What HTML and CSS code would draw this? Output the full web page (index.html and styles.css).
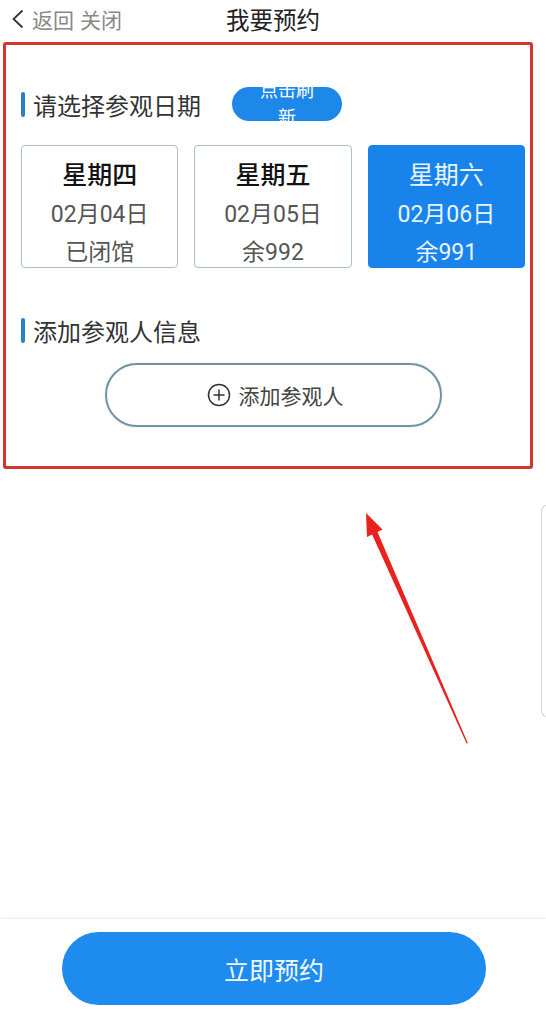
FILE: index.html
```html
<!DOCTYPE html>
<html lang="zh-CN">
<head>
  <meta charset="UTF-8">
  <meta name="viewport" content="width=device-width, initial-scale=1.0">
  <title>我要预约</title>
  <link rel="stylesheet" href="styles.css">
</head>
<body>
  <div class="page">
    <!-- Top bar -->
    <div class="topbar">
      <div class="nav-left">
        <svg class="back-icon" width="14" height="20" viewBox="0 0 14 20">
          <polyline points="11.5,1.5 2.5,10 11.5,18.5" fill="none" stroke="#333" stroke-width="1.8"/>
        </svg>
        <span>返回</span>
        <span>关闭</span>
      </div>
      <div class="nav-title">我要预约</div>
      <div></div>
    </div>

    <!-- Booking panel -->
    <div class="panel">
      <div class="section-title">
        <span class="bar"></span>
        <span>请选择参观日期</span>
        <button class="refresh-btn">点击刷新</button>
      </div>

      <div class="dates">
        <div class="date-card">
          <div class="week">星期四</div>
          <div class="day">02月04日</div>
          <div class="left">已闭馆</div>
        </div>
        <div class="date-card">
          <div class="week">星期五</div>
          <div class="day">02月05日</div>
          <div class="left">余992</div>
        </div>
        <div class="date-card active">
          <div class="week">星期六</div>
          <div class="day">02月06日</div>
          <div class="left">余991</div>
        </div>
      </div>

      <div class="section-title second">
        <span class="bar"></span>
        <span>添加参观人信息</span>
      </div>

      <button class="add-btn">
        <svg width="24" height="24" viewBox="0 0 24 24">
          <circle cx="12" cy="12" r="10.5" fill="none" stroke="#333" stroke-width="1.5"/>
          <line x1="12" y1="6.5" x2="12" y2="17.5" stroke="#333" stroke-width="1.5"/>
          <line x1="6.5" y1="12" x2="17.5" y2="12" stroke="#333" stroke-width="1.5"/>
        </svg>
        <span>添加参观人</span>
      </button>
    </div>

    <!-- Side card peeking in from the right -->
    <div class="side-card"></div>

    <!-- Bottom action -->
    <div class="bottom-bar">
      <button class="submit-btn">立即预约</button>
    </div>

    <!-- Annotation arrow -->
    <svg class="arrow" width="546" height="1013" viewBox="0 0 546 1013">
      <polygon points="366,513 382.5,529.5 377.5,532 467.8,743 466.6,743.4 372.1,534.4 367,537" fill="#e8231d"/>
    </svg>
  </div>
</body>
</html>
```

FILE: styles.css
```css
* {
  box-sizing: border-box;
}

body {
  margin: 0;
  background: #fff;
  font-family: Roboto, "Noto Sans CJK SC", sans-serif;
  color: #333;
}

.page {
  position: relative;
  width: 546px;
  height: 1013px;
  display: flex;
  flex-direction: column;
  overflow: hidden;
}

.topbar {
  height: 42px;
  display: grid;
  grid-template-columns: 1fr auto 1fr;
  align-items: center;
  padding-bottom: 4px;
}

.nav-left {
  display: flex;
  align-items: center;
  gap: 6px;
  padding-left: 11px;
  font-size: 21px;
  color: #888;
}

.back-icon {
  margin-right: 1px;
}

.nav-title {
  font-size: 23.5px;
  color: #222;
}

.panel {
  width: 530px;
  margin-left: 3px;
  border: 3px solid #d2352d;
  border-radius: 3px;
  padding: 41px 5px 39px 15px;
}

.section-title {
  display: flex;
  align-items: center;
  height: 36px;
  font-size: 24px;
  color: #333;
}

.section-title .bar {
  width: 4px;
  height: 25px;
  border-radius: 2px;
  background: #2a80c4;
  margin-right: 8px;
}

.section-title.second {
  margin-top: 47px;
  height: 30px;
}

.refresh-btn {
  margin-left: 31px;
  width: 110px;
  height: 34px;
  border: none;
  border-radius: 17px;
  background: #1e88e8;
  color: #fff;
  font-family: inherit;
  font-size: 18px;
  line-height: 27px;
  padding: 0 22px;
  display: flex;
  align-items: center;
  justify-content: center;
  text-align: center;
  overflow: visible;
}

.dates {
  margin-top: 23px;
  display: grid;
  grid-template-columns: repeat(3, 1fr);
  gap: 16px;
}

.date-card {
  height: 123px;
  border: 1px solid #aebfca;
  border-radius: 4px;
  padding-top: 10px;
  text-align: center;
  color: #555;
}

.date-card .week {
  font-size: 25px;
  font-weight: 500;
  color: #111;
  line-height: 40px;
}

.date-card .day,
.date-card .left {
  font-size: 23px;
  line-height: 38px;
}

.date-card.active {
  background: #1983ec;
  border-color: #1983ec;
  color: #eaf4ff;
}

.date-card.active .week {
  color: #eaf4ff;
  font-weight: 400;
}

.add-btn {
  display: flex;
  align-items: center;
  justify-content: center;
  gap: 8px;
  width: 337px;
  height: 64px;
  margin: 18px auto 0;
  border: 2px solid #7493a2;
  border-radius: 32px;
  background: #fff;
  box-shadow: 0 0 3px #d6eaf2;
  font-family: inherit;
  font-size: 21px;
  color: #444;
  padding: 0 0 0 4px;
}

.side-card {
  margin: 36px 0 0 541px;
  width: 20px;
  height: 212px;
  border: 1px solid #d4d4d4;
  border-right: none;
  border-radius: 6px 0 0 6px;
}

.bottom-bar {
  margin-top: auto;
  height: 95px;
  border-top: 1px solid #f0f0f0;
  box-shadow: 0 -2px 4px rgba(0, 0, 0, 0.03);
  padding-top: 13px;
}

.submit-btn {
  display: block;
  width: 424px;
  height: 73px;
  margin-left: 62px;
  border: none;
  border-radius: 37px;
  background: #1e8bef;
  color: #f2f8ff;
  font-family: inherit;
  font-size: 25px;
}

.arrow {
  position: absolute;
  left: 0;
  top: 0;
  pointer-events: none;
}
```
